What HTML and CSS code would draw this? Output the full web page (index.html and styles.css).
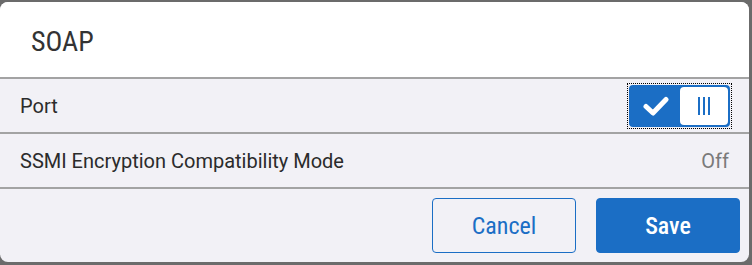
FILE: index.html
```html
<!DOCTYPE html>
<html>
<head>
<meta charset="utf-8">
<link rel="stylesheet" href="styles.css">
</head>
<body>
<div class="dialog">
  <div class="header"><h1 class="title">SOAP</h1></div>
  <div class="row">
    <span class="label">Port</span>
    <div class="toggle-focus">
      <div class="toggle">
        <div class="toggle-on">
          <svg width="26" height="20" viewBox="0 0 26 20"><path d="M3 10.5 L10 17 L23 3.5" fill="none" stroke="#fff" stroke-width="5" stroke-linecap="round" stroke-linejoin="round"/></svg>
        </div>
        <div class="toggle-knob">
          <span class="bar"></span><span class="bar"></span><span class="bar"></span>
        </div>
      </div>
    </div>
  </div>
  <div class="row">
    <span class="label">SSMI Encryption Compatibility Mode</span>
    <span class="value">Off</span>
  </div>
  <div class="footer">
    <button class="btn btn-secondary">Cancel</button>
    <button class="btn btn-primary">Save</button>
  </div>
</div>
</body>
</html>
```
FILE: styles.css
```css
html, body {
  margin: 0;
  padding: 0;
  background: #6b6b6b;
  width: 752px;
  height: 265px;
  overflow: hidden;
}
body {
  padding: 2px 3px 3px 0;
  box-sizing: border-box;
  font-family: Roboto, "Liberation Sans", sans-serif;
}
.dialog {
  width: 749px;
  height: 260px;
  background: #f2f1f6;
  border-radius: 8px;
  overflow: hidden;
  display: flex;
  flex-direction: column;
}
.header {
  background: #fff;
  height: 75px;
  border-bottom: 2px solid #a3a3a3;
  display: flex;
  align-items: center;
  padding-left: 31px;
  padding-top: 3px;
  box-sizing: border-box;
  height: 77px;
}
.title {
  margin: 0;
  font-weight: 400;
  font-size: 28px;
  font-stretch: 83%;
  color: #333;
}
.row {
  height: 53px;
  border-bottom: 2px solid #a3a3a3;
  display: flex;
  align-items: center;
  justify-content: space-between;
  padding: 0 20px;
}
.label {
  font-size: 20px;
  color: #2b2b2b;
}
.value {
  font-size: 20px;
  font-stretch: 90%;
  color: #7a7a7a;
}
.toggle-focus {
  outline: 1px dotted #000;
  padding: 1px;
  margin-right: -2px;
}
.toggle {
  display: flex;
  width: 101px;
  height: 42px;
  background: #1b6ec5;
  border-radius: 4px;
  border: 2px solid #1b6ec5;
  box-sizing: border-box;
}
.toggle-on {
  width: 49px;
  display: flex;
  align-items: center;
  justify-content: center;
}
.toggle-knob {
  flex: 1;
  background: #fff;
  border-radius: 4px;
  display: flex;
  align-items: center;
  justify-content: center;
  gap: 3px;
}
.bar {
  width: 2px;
  height: 18px;
  background: #1b6ec5;
}
.footer {
  flex: 1;
  display: flex;
  justify-content: flex-end;
  align-items: center;
  gap: 20px;
  padding: 0 9px 0 0;
}
.btn {
  width: 144px;
  height: 55px;
  border-radius: 4px;
  font-family: Roboto, "Liberation Sans", sans-serif;
  font-size: 24px;
  font-stretch: 87.5%;
  cursor: pointer;
}
.btn-secondary {
  background: transparent;
  border: 1px solid #1b6ec5;
  color: #1b6ec5;
}
.btn-primary {
  background: #1b6ec5;
  border: 1px solid #1b6ec5;
  color: #fff;
  font-weight: 500;
}
```
